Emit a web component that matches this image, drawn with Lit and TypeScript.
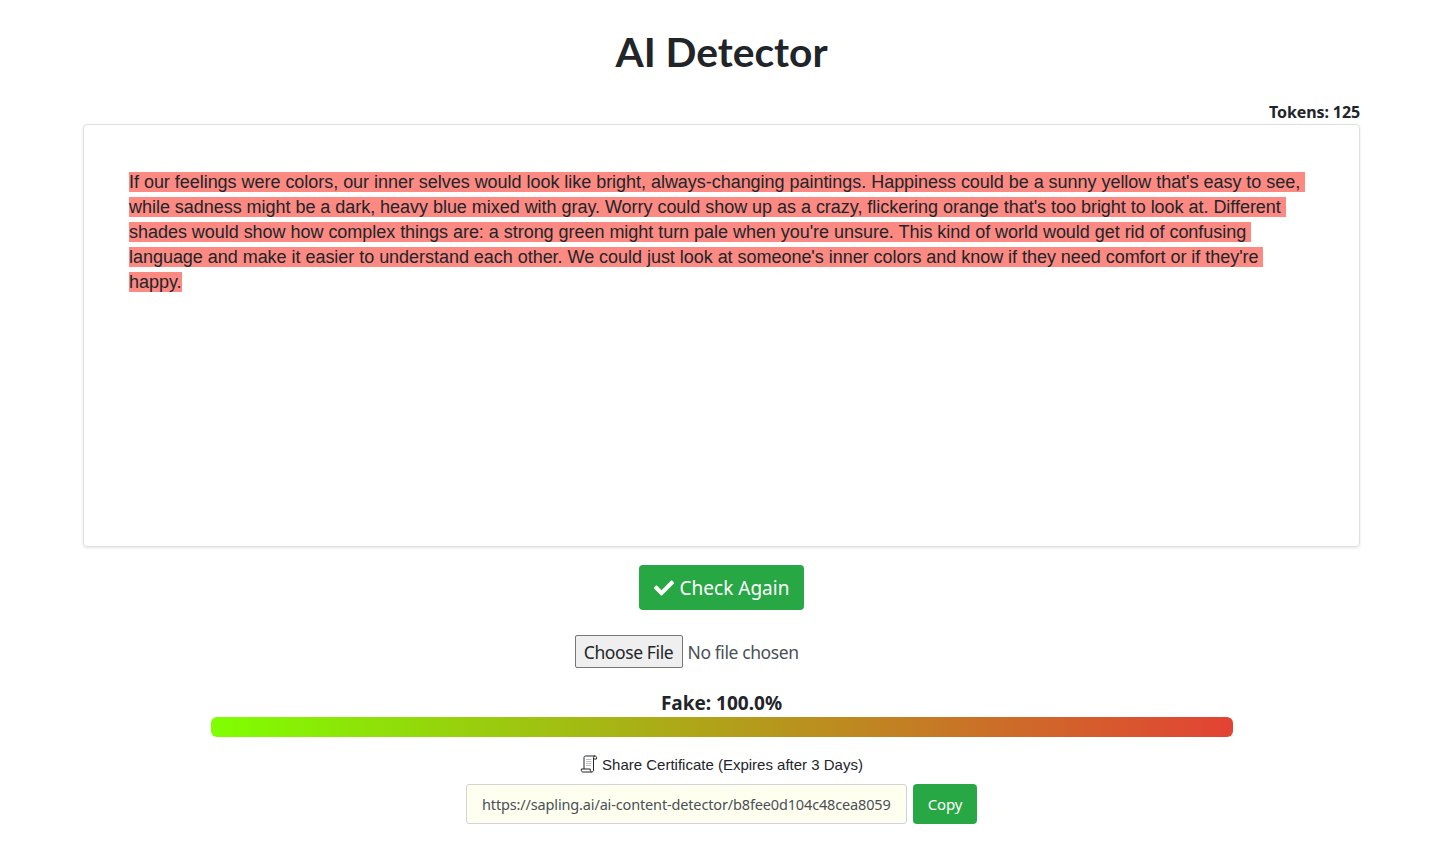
import { LitElement, css, html } from 'lit';
import { customElement } from 'lit/decorators.js';

const TEXT = `If our feelings were colors, our inner selves would look like bright, always-changing paintings. Happiness could be a sunny yellow that's easy to see, while sadness might be a dark, heavy blue mixed with gray. Worry could show up as a crazy, flickering orange that's too bright to look at. Different shades would show how complex things are: a strong green might turn pale when you're unsure. This kind of world would get rid of confusing language and make it easier to understand each other. We could just look at someone's inner colors and know if they need comfort or if they're happy.`;

@customElement('app-root')
export class AppRoot extends LitElement {
  static styles = css`
    :host {
      display: block;
      height: 848px;
      background: #fff;
      color: #212529;
      font-family: "Noto Sans", "Open Sans", sans-serif;
      overflow: hidden;
    }
    .wrap {
      padding: 24px 78px 0 83px;
    }
    .title {
      margin: 0;
      text-align: center;
      font-family: "Lato", "Noto Sans", sans-serif;
      font-size: 40.700px;
      line-height: 56px;
      font-weight: 700;
    }
    .tokens {
      margin-top: 20px;
      text-align: right;
      font-size: 16px;
      line-height: 24px;
      font-weight: 700;
      letter-spacing: -0.1px;
    }
    .editor {
      box-sizing: border-box;
      height: 423px;
      border: 1px solid #dfdfdf;
      border-radius: 4px;
      box-shadow: 0 1px 3px rgba(0, 0, 0, 0.1);
      padding: 45px;
      font-family: "Liberation Sans", Arial, sans-serif;
      font-size: 18px;
      line-height: 25px;
      letter-spacing: -0.033px;
      white-space: pre-wrap;
    }
    .editor span {
      background: #fc8a83;
    }
    .actions {
      display: flex;
      flex-direction: column;
      align-items: center;
    }
    .check {
      display: flex;
      align-items: center;
      gap: 6px;
      margin-top: 18px;
      height: 45px;
      padding: 1px 15px 0;
      box-sizing: border-box;
      border: none;
      border-radius: 4px;
      background: #28a745;
      color: #fff;
      font-family: inherit;
      font-size: 19px;
    }
    .check svg {
      width: 20px;
      height: 20px;
      fill: #fff;
    }
    .file {
      display: block;
      box-sizing: border-box;
      width: 294px;
      height: 33px;
      margin-top: 25px;
      padding: 0;
      font-family: inherit;
      font-size: 17.500px;
      letter-spacing: -0.4px;
      line-height: 33px;
      color: #495057;
    }
    .file::file-selector-button {
      box-sizing: border-box;
      width: 108px;
      height: 33px;
      margin: 0 5px 0 0;
      padding: 0;
      border: 1px solid #767676;
      border-radius: 2px;
      background: #efefef;
      color: #212529;
      font: inherit;
      letter-spacing: inherit;
    }
    .score {
      margin-top: 23px;
      font-size: 19px;
      line-height: 24px;
      font-weight: 700;
    }
    .bar {
      width: 1022px;
      height: 20px;
      margin-top: 2px;
      border-radius: 6px;
      background: linear-gradient(to right, #7fff00, #e34234);
    }
    .share {
      display: flex;
      align-items: center;
      gap: 4px;
      margin-top: 16px;
      height: 22px;
      font-family: "Liberation Sans", Arial, sans-serif;
      font-size: 15px;
    }
    .link {
      display: flex;
      gap: 6px;
      margin-top: 9px;
    }
    .url {
      box-sizing: border-box;
      width: 441px;
      height: 40px;
      padding: 0 15px;
      border: 1px solid #ced4da;
      border-radius: 3px;
      outline: none;
      background: #fffff0;
      color: #495057;
      font-family: inherit;
      font-size: 14.500px;
      letter-spacing: -0.15px;
    }
    .copy {
      width: 64px;
      height: 40px;
      border: none;
      padding: 0;
      border-radius: 4px;
      background: #28a745;
      color: #fff;
      font-family: inherit;
      font-size: 15px;
      letter-spacing: -0.2px;
    }
  `;

  render() {
    return html`
      <div class="wrap">
        <h1 class="title">AI Detector</h1>
        <div class="tokens">Tokens: 125</div>
        <div class="editor"><span>${TEXT}</span></div>
        <div class="actions">
          <button class="check">
            <svg viewBox="0 0 512 512"><path d="M173.898 439.404l-166.4-166.4c-9.997-9.997-9.997-26.206 0-36.204l36.203-36.204c9.997-9.998 26.207-9.998 36.204 0L192 312.69 432.095 72.596c9.997-9.997 26.207-9.997 36.204 0l36.203 36.204c9.997 9.997 9.997 26.206 0 36.204l-294.4 294.401c-9.998 9.997-26.207 9.997-36.204-.001z"/></svg>
            Check Again
          </button>
          <input class="file" type="file" />
          <div class="score">Fake: 100.0%</div>
          <div class="bar"></div>
          <div class="share">
            <svg width="18" height="18" viewBox="0 0 18 18" fill="none" stroke="#212529" stroke-width="1">
              <path d="M5.500 1h9.500c1 0 1.500.7 1.500 1.500V4h-3" />
              <path d="M15 1c-1 0-1.500.7-1.500 1.500V15c0 1.200-.7 2-1.800 2H3c-1.100 0-1.700-.9-1.700-1.900V14h9v1c0 1.100.5 2 1.400 2" />
              <path d="M5.500 1C4.600 1 4 1.700 4 2.500V14" />
              <path d="M6 4.500h5.500M6 6.500h5.500M6 8.500h5.500M6 10.500h5" stroke="#a8adb3" stroke-width=".8" />
            </svg>
            Share Certificate (Expires after 3 Days)
          </div>
          <div class="link">
            <input class="url" readonly value="https://sapling.ai/ai-content-detector/b8fee0d104c48cea8059" />
            <button class="copy">Copy</button>
          </div>
        </div>
      </div>
    `;
  }
}
